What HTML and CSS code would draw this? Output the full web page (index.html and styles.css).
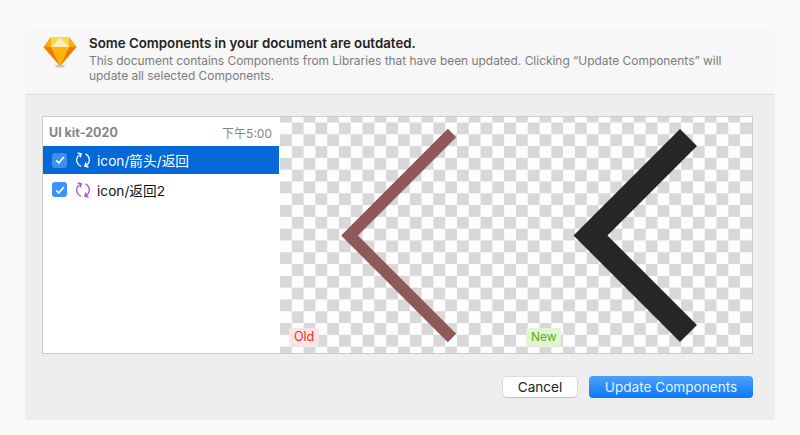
FILE: index.html
```html
<!DOCTYPE html>
<html lang="en">
<head>
<meta charset="utf-8">
<title>Update Components</title>
<link rel="stylesheet" href="styles.css">
</head>
<body>
<main class="dialog">
  <header class="head">
    <svg class="logo" width="34" height="34" viewBox="0 0 34 34">
      <ellipse cx="17" cy="31" rx="5" ry="1.500" fill="#c8c8c8"/>
      <polygon points="8,2 26,2 33.500,12 17,31 0.500,12" fill="#fdb300"/>
      <polygon points="0.500,12 8,12 17,31" fill="#f07a00"/>
      <polygon points="33.500,12 26,12 17,31" fill="#f07a00"/>
      <polygon points="8,12 26,12 17,31" fill="#feb40c"/>
      <polygon points="8,2 8,12 17,2" fill="#fdd64a"/>
      <polygon points="26,2 26,12 17,2" fill="#fdd64a"/>
      <polygon points="17,2 8,12 26,12" fill="#feecb0"/>
      <polygon points="8,2 8,12 0.500,12" fill="#fca90a"/>
      <polygon points="26,2 26,12 33.500,12" fill="#fca90a"/>
    </svg>
    <div class="head-text">
      <h1 class="title">Some Components in your document are outdated.</h1>
      <p class="desc">This document contains Components from Libraries that have been updated. Clicking “Update Components” will update all selected Components.</p>
    </div>
  </header>
  <section class="body">
    <div class="panel">
      <aside class="side">
        <div class="side-head"><span class="lib">UI kit-2020</span><span class="time">下午5:00</span></div>
        <div class="row row-sel">
          <span class="check check-sel"><svg width="12" height="12" viewBox="0 0 12 12"><path d="M2.300 6.400 4.800 9 9.800 3" fill="none" stroke="#fff" stroke-width="1.700"/></svg></span>
          <svg class="sync sync-sel" width="14" height="16" viewBox="0 0 14 16"><path d="M4.500 2.500C1.800 3.500.7 6 .7 8c0 2.800 1.600 5 4.300 6.300M1.500.8l3.800 1-1.300 3.700M9.500 1.800C12 3 13.300 5.500 13.300 8c0 2.500-1.500 4.800-4.300 5.800M12.500 15l-3.700-1L10 10.500" fill="none" stroke-width="1.300"/></svg>
          <span class="name">icon/箭头/返回</span>
        </div>
        <div class="row row-plain">
          <span class="check"><svg width="12" height="12" viewBox="0 0 12 12"><path d="M2.300 6.400 4.800 9 9.800 3" fill="none" stroke="#fff" stroke-width="1.700"/></svg></span>
          <svg class="sync sync-plain" width="14" height="16" viewBox="0 0 14 16"><path d="M4.500 2.500C1.800 3.500.7 6 .7 8c0 2.800 1.600 5 4.300 6.300M1.500.8l3.800 1-1.300 3.700M9.500 1.800C12 3 13.300 5.500 13.300 8c0 2.500-1.500 4.800-4.300 5.800M12.500 15l-3.700-1L10 10.500" fill="none" stroke-width="1.300"/></svg>
          <span class="name">icon/返回2</span>
        </div>
      </aside>
      <div class="preview">
        <svg class="art" width="473" height="236" viewBox="0 0 473 236">
          <polyline points="172,16 69.500,118.500 172,221" fill="none" stroke="#8f5959" stroke-width="11.800"/>
          <polyline points="408.500,20.500 310.500,118.500 408.500,216.500" fill="none" stroke="#262626" stroke-width="24"/>
        </svg>
        <span class="tag tag-old">Old</span>
        <span class="tag tag-new">New</span>
      </div>
    </div>
    <div class="actions">
      <button class="btn btn-cancel">Cancel</button>
      <button class="btn btn-primary">Update Components</button>
    </div>
  </section>
</main>
</body>
</html>
```
FILE: styles.css
```css
* { box-sizing: border-box; }
html, body { height: 100%; }
body {
  margin: 0;
  padding: 26px 25px 15px;
  background: #fafafa;
  font-family: Inter, "Noto Sans CJK SC", sans-serif;
  overflow: hidden;
}
.dialog { width: 750px; height: 394px; display: flex; flex-direction: column; }
.head {
  height: 69px;
  flex: none;
  display: flex;
  background: #f7f7f7;
  border-bottom: 1px solid #dcdcdc;
  padding: 9px 0 0 18px;
  gap: 12px;
}
.logo { flex: none; }
.head-text { width: 640px; }
.title { margin: 0 0 1px; font-size: 13.300px; line-height: 17px; font-weight: 600; color: #222; }
.desc { margin: 0; font-size: 11.930px; line-height: 15px; color: #7c7c7c; }
.body { flex: 1; background: #eee; padding: 21px 22px 0 17px; display: flex; flex-direction: column; }
.panel { height: 238px; flex: none; display: flex; border: 1px solid #ccc; background: #fff; }
.side { width: 236px; flex: none; background: #fff; }
.side-head { height: 29px; padding: 1px 7px 0 6px; display: flex; align-items: center; justify-content: space-between; }
.lib { font-size: 12.500px; font-weight: 700; color: #858585; }
.time { font-size: 12px; color: #858585; }
.row { display: flex; align-items: center; padding-left: 9px; }
.row-sel { height: 28px; background: #0468d8; color: #fff; }
.row-plain { height: 31px; color: #111; }
.check { width: 15px; height: 15px; border-radius: 3px; background: #3a92fa; display: flex; align-items: center; justify-content: center; flex: none; }
.check-sel { background: #3d90f0; }
.sync { margin-left: 9px; flex: none; }
.sync-sel { stroke: #fff; }
.sync-plain { stroke: #a855c8; }
.name { margin-left: 7px; font-size: 13.700px; }
.preview {
  flex: 1;
  position: relative;
  margin-left: 1px;
  background: repeating-conic-gradient(#d8d8d8 0 25%, #fdfdfd 0 50%) 0 5.500px / 23.600px 23.600px;
}
.art { position: absolute; left: 0; top: 0; }
.tag { position: absolute; top: 211px; height: 18px; padding: 0 5px; border-radius: 2px; line-height: 18px; }
.tag-old { left: 9px; width: 30px; font-size: 12.500px; background: #fde4e4; color: #ee2c2c; }
.tag-new { left: 246px; width: 35px; font-size: 12px; background: #e0f6cf; color: #58ab1c; }
.actions { display: flex; justify-content: flex-end; align-items: center; gap: 12px; margin-top: 22px; }
.btn { border: 0; border-radius: 4px; font-family: inherit; font-size: 13.600px; padding: 0; }
.btn-cancel { width: 74px; height: 20px; background: #fff; color: #222; box-shadow: 0 0 0 .5px #ccc, 0 1px 1px rgba(0,0,0,.2); }
.btn-primary { width: 164px; height: 22px; background: linear-gradient(#4ea1fb, #0c78f8); color: #e8f2ff; }
```
